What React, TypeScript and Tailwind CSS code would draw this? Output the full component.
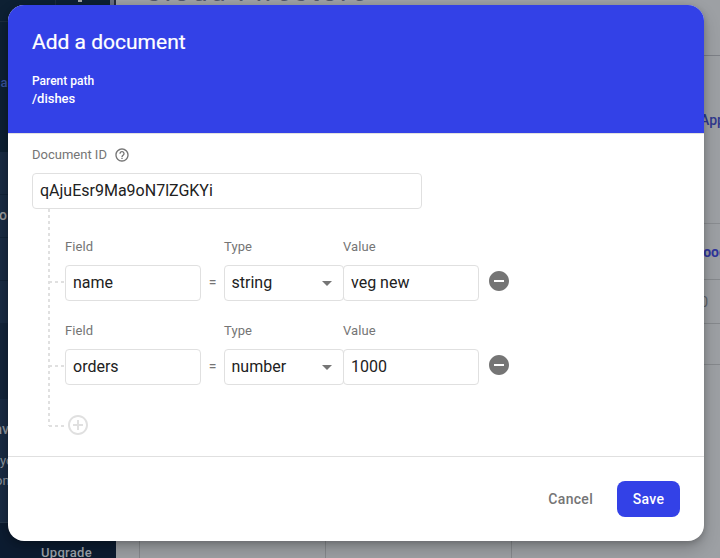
import React from "react";

function SideText({ children, className }: { children: React.ReactNode; className: string }) {
  return <div className={`absolute whitespace-nowrap leading-5 ${className}`}>{children}</div>;
}

function Backdrop() {
  return (
    <div className="flex h-full w-full overflow-hidden">
      <aside className="relative flex w-[116px] shrink-0 flex-col bg-[#0d2033]">
        <div className="h-[22px] shrink-0 border-b border-[#1b2c3e]">
          <div className="ml-[55px] h-full w-px bg-[#1b2c3e]" />
        </div>
        <div className="h-[130px] shrink-0" />
        <div className="h-[43px] shrink-0 border-b border-[#122338] bg-[#192b43]" />
        <div className="h-[43px] shrink-0 border-b border-[#122338] bg-[#192b43]" />
        <div className="h-[43px] shrink-0 border-b border-[#122338] bg-[#192b43]" />
        <div className="h-[42px] shrink-0 bg-[#192b43]" />
        <div className="h-[76px] shrink-0 bg-[#13243a]" />
        <div className="h-[124px] shrink-0 border-b border-[#26374b] bg-[#192b43]" />
        <div className="flex grow justify-start bg-[#0c1c31] pl-[41px] pt-5">
          <span className="text-[13px] font-medium leading-5 tracking-[0.3px] text-[#9da3ab]">Upgrade</span>
        </div>
        <SideText className="left-[0.5px] top-[73px] text-[13px] font-medium text-[#39539a]">a</SideText>
        <SideText className="left-[-1px] top-[205px] text-[14px] font-medium text-[#9a9b9e]">o</SideText>
        <SideText className="right-[107px] top-[419px] text-[14px] font-medium text-[#8e969f]">av</SideText>
        <SideText className="left-0 top-[451px] text-[13px] text-[#8e969f]">yo</SideText>
        <SideText className="left-[-5px] top-[471px] text-[13px] text-[#8e969f]">on</SideText>
        <div className="absolute left-[78px] top-0 h-[2px] w-[4px] bg-[#a2a5a8]" />
        <div className="absolute left-[110px] top-0 h-[5px] w-[4px] bg-[#686f80]" />
        <div className="absolute left-[114px] top-0 h-[5px] w-[2px] bg-[#252b3b]" />
      </aside>
      <main className="relative flex grow flex-col overflow-hidden bg-[#9da0a4]">
        <div className="h-[56px] shrink-0 border-b border-[#7d8087]">
          <div className="-mt-[22px] ml-[28px] whitespace-nowrap text-[28px] leading-[28px] tracking-[2.4px] text-[#52586b]">Cloud Firestore</div>
        </div>
        <div className="flex h-[168px] shrink-0 justify-end border-b border-[#8a8d91] pt-[54px]">
          <span className="-mr-[5px] text-[14px] font-medium leading-5 text-[#30398e]">App</span>
        </div>
        <div className="flex h-[56px] shrink-0 justify-end border-b border-[#86898d] pt-[18px]">
          <span className="-mr-[7px] text-[14px] font-bold leading-5 text-[#30359b]">oog</span>
        </div>
        <div className="flex h-[44px] shrink-0 justify-end border-b border-[#86898d] pr-[12px] pt-[12px]">
          <span className="text-[14px] leading-5 text-[#606468]">0</span>
        </div>
        <div className="h-[41px] shrink-0 border-b border-[#86898d]" />
        <div className="flex grow">
          <div className="w-[24px] border-r border-[#86898d]" />
          <div className="w-[186px] border-r border-[#86898d]" />
          <div className="w-[186px] border-r border-[#86898d]" />
        </div>
      </main>
    </div>
  );
}

function HelpIcon() {
  return (
    <svg className="size-4" viewBox="0 0 24 24" fill="#757575">
      <path d="M11 18h2v-2h-2v2zm1-16C6.48 2 2 6.48 2 12s4.48 10 10 10 10-4.48 10-10S17.52 2 12 2zm0 18c-4.41 0-8-3.59-8-8s3.59-8 8-8 8 3.59 8 8-3.59 8-8 8zm0-14c-2.21 0-4 1.79-4 4h2c0-1.1.9-2 2-2s2 .9 2 2c0 2-3 1.75-3 5h2c0-2.25 3-2.5 3-5 0-2.21-1.79-4-4-4z" />
    </svg>
  );
}

function RemoveIcon() {
  return (
    <svg className="size-6" viewBox="0 0 24 24" fill="#757575">
      <path d="M12 2C6.48 2 2 6.48 2 12s4.48 10 10 10 10-4.48 10-10S17.52 2 12 2zm5 11H7v-2h10v2z" />
    </svg>
  );
}

function AddIcon() {
  return (
    <svg className="size-6" viewBox="0 0 24 24" fill="#e0e0e0">
      <path d="M13 7h-2v4H7v2h4v4h2v-4h4v-2h-4V7zm-1-5C6.48 2 2 6.48 2 12s4.48 10 10 10 10-4.48 10-10S17.52 2 12 2zm0 18c-4.41 0-8-3.59-8-8s3.59-8 8-8 8 3.59 8 8-3.59 8-8 8z" />
    </svg>
  );
}

const dashX = "h-[2px] w-4 bg-[repeating-linear-gradient(to_right,#e0e0e0_0_3px,transparent_3px_6px)]";
const box = "flex h-9 items-center rounded border border-[#e0e0e0] px-[7px] text-base text-[#212121]";
const label = "text-[13px] leading-5 tracking-[0.1px] text-[#757575]";

function FieldRow({ name, type, value }: { name: string; type: string; value: string }) {
  return (
    <div className="flex h-[84px]">
      <div className={`mt-11 ${dashX}`} />
      <div className="w-[136px]">
        <div className={label}>Field</div>
        <div className={`mt-2 ${box}`}>{name}</div>
      </div>
      <div className="mt-7 flex h-[34px] w-[23px] items-center justify-center text-[14px] text-[#757575]">=</div>
      <div className="w-[119px]">
        <div className={label}>Type</div>
        <div className={`mt-2 w-[120px] justify-between ${box}`}>
          <span className="-ml-[0.5px]">{type}</span>
          <svg className="mr-1 h-[5px] w-[10px]" viewBox="0 0 10 5" fill="#757575">
            <path d="M0 0h10L5 5z" />
          </svg>
        </div>
      </div>
      <div className="w-[136px]">
        <div className={label}>Value</div>
        <div className={`mt-2 ${box}`}>{value}</div>
      </div>
      <div className="ml-[7.5px] mt-8">
        <RemoveIcon />
      </div>
    </div>
  );
}

export default function App() {
  return (
    <div className="relative h-[558px] w-[720px] overflow-hidden font-['Roboto',sans-serif]">
      <Backdrop />
      <div className="absolute left-2 top-[5px] flex h-[536px] w-[696px] flex-col overflow-hidden rounded-2xl bg-white shadow-[0_8px_17px_rgba(0,0,0,0.2),0_2px_6px_rgba(0,0,0,0.2)]">
        <header className="h-32 shrink-0 bg-[#3341e7] px-6 pt-[23px] text-white">
          <h1 className="text-[21px] leading-7 [-webkit-text-stroke:0.2px_white]">Add a document</h1>
          <div className="mt-4 text-xs font-medium leading-[18px]">Parent path</div>
          <div className="text-[13px] font-medium leading-[18px]">/dishes</div>
        </header>
        <section className="h-[324px] shrink-0 border-b border-t border-[#e0e0e0] pl-6 pt-[11px]">
          <div className="flex items-center gap-[7px]">
            <span className="text-[13px] leading-5 text-[#757575]">Document ID</span>
            <HelpIcon />
          </div>
          <div className={`mt-2 w-[390px] ${box}`}>qAjuEsr9Ma9oN7lZGKYi</div>
          <div className="ml-4 flex">
            <div className="h-[217px] w-[2px] shrink-0 bg-[repeating-linear-gradient(to_bottom,#e0e0e0_0_3px,transparent_3px_6px)]" />
            <div className="-ml-px flex flex-col pt-7">
              <FieldRow name="name" type="string" value="veg new" />
              <FieldRow name="orders" type="number" value="1000" />
              <div className="flex">
                <div className={`mt-5 ${dashX}`} />
                <div className="ml-px mt-2">
                  <AddIcon />
                </div>
              </div>
            </div>
          </div>
        </section>
        <footer className="flex grow items-center justify-end gap-6 pr-6 text-sm font-medium tracking-[0.3px]">
          <button className="text-[#757575]">Cancel</button>
          <button className="h-9 w-[63px] rounded-lg bg-[#3341e7] text-white">Save</button>
        </footer>
      </div>
    </div>
  );
}
